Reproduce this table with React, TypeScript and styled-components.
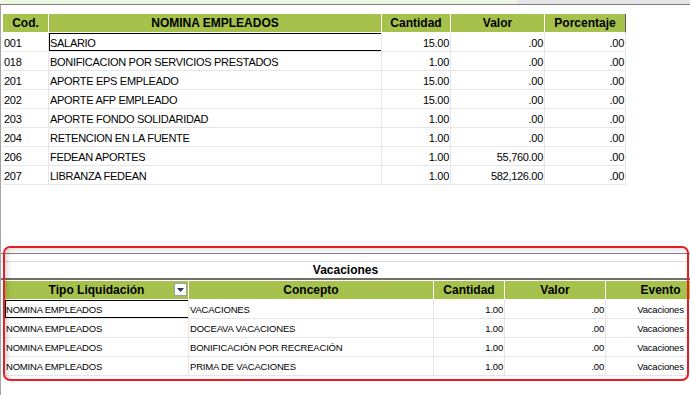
import styled, { createGlobalStyle } from "styled-components";

type Col = { title: string; width: number; align?: "left" | "right" | "center" };

const topCols: Col[] = [
  { title: "Cod.", width: 46 },
  { title: "NOMINA EMPLEADOS", width: 333 },
  { title: "Cantidad", width: 69, align: "right" },
  { title: "Valor", width: 94, align: "right" },
  { title: "Porcentaje", width: 81, align: "right" },
];

const topRows = [
  ["001", "SALARIO", "15.00", ".00", ".00"],
  ["018", "BONIFICACION POR SERVICIOS PRESTADOS", "1.00", ".00", ".00"],
  ["201", "APORTE EPS EMPLEADO", "15.00", ".00", ".00"],
  ["202", "APORTE AFP EMPLEADO", "15.00", ".00", ".00"],
  ["203", "APORTE FONDO SOLIDARIDAD", "1.00", ".00", ".00"],
  ["204", "RETENCION EN LA FUENTE", "1.00", ".00", ".00"],
  ["206", "FEDEAN APORTES", "1.00", "55,760.00", ".00"],
  ["207", "LIBRANZA FEDEAN", "1.00", "582,126.00", ".00"],
];

const bottomCols: Col[] = [
  { title: "Tipo Liquidación", width: 184 },
  { title: "Concepto", width: 245 },
  { title: "Cantidad", width: 71, align: "right" },
  { title: "Valor", width: 101, align: "right" },
  { title: "Evento", width: 110, align: "center" },
];

const bottomRows = [
  ["NOMINA EMPLEADOS", "VACACIONES", "1.00", ".00", "Vacaciones"],
  ["NOMINA EMPLEADOS", "DOCEAVA VACACIONES", "1.00", ".00", "Vacaciones"],
  ["NOMINA EMPLEADOS", "BONIFICACIÓN POR RECREACIÓN", "1.00", ".00", "Vacaciones"],
  ["NOMINA EMPLEADOS", "PRIMA DE VACACIONES", "1.00", ".00", "Vacaciones"],
];

const GlobalStyle = createGlobalStyle`
  html, body {
    margin: 0;
    padding: 0;
    background: #fff;
    overflow: hidden;
  }
  body {
    font-family: "Liberation Sans", Arial, sans-serif;
    color: #000;
  }
`;

const Page = styled.div`
  position: relative;
  width: 690px;
  height: 395px;
  overflow: hidden;
  display: flex;
  flex-direction: column;
  background: #fff;
`;

const TopBar = styled.div`
  display: flex;
  height: 4px;
  border-bottom: 1px solid #7c7c7c;
`;

const TopBarPart = styled.div<{ $bg: string; $grow?: boolean }>`
  width: ${(p) => (p.$grow ? "auto" : "517px")};
  flex: ${(p) => (p.$grow ? 1 : "none")};
  background: ${(p) => p.$bg};
`;

const Main = styled.div`
  flex: 1;
  display: flex;
  flex-direction: column;
  border-left: 1px solid #a4a4a4;
`;

const TopSection = styled.div`
  height: 239px;
  padding: 9px 0 0 2px;
`;

const Grid = styled.div<{ $cols: string }>`
  display: grid;
  grid-template-columns: ${(p) => p.$cols};
  width: max-content;
`;

const HeadCell = styled.div<{ $last?: boolean; $size: number }>`
  position: relative;
  box-sizing: border-box;
  height: 19px;
  background: #a7c24c;
  border-right: 1px solid ${(p) => (p.$last ? "#5a5a5a" : "#fff")};
  border-bottom: 1px solid #fff;
  font-weight: bold;
  font-size: ${(p) => p.$size}px;
  line-height: 18px;
  text-align: center;
  white-space: nowrap;
  overflow: hidden;
`;

const Cell = styled.div<{
  $align?: string;
  $size: number;
  $spacing: number;
  $selected?: boolean;
}>`
  box-sizing: border-box;
  height: 19px;
  padding: 1px ${(p) => (p.$align === "right" ? "1px" : "0")} 0
    ${(p) => (p.$align === "right" || p.$align === "center" ? "0" : "1px")};
  border-right: 1px solid #e6e6e6;
  border-bottom: 1px solid #e6e6e6;
  font-size: ${(p) => p.$size}px;
  letter-spacing: ${(p) => p.$spacing}px;
  line-height: 18px;
  text-align: ${(p) => p.$align ?? "left"};
  white-space: nowrap;
  overflow: hidden;
  box-shadow: ${(p) =>
    p.$selected
      ? "inset 1px 0 0 #000, inset 0 1px 0 #000, inset 0 -1px 0 #000"
      : "none"};
`;

const BottomPanel = styled.div`
  border-top: 1px solid #7f7f7f;
  display: flex;
  flex-direction: column;
`;

const PanelGap = styled.div`
  height: 7px;
  border-bottom: 1px solid #dadada;
`;

const PanelTitle = styled.div`
  height: 16px;
  line-height: 16px;
  text-align: center;
  font-weight: bold;
  font-size: 12px;
  border-bottom: 2px solid #6e6e6e;
`;

const BottomTable = styled.div`
  margin: 1px 0 0 4px;
`;

const DropButton = styled.div`
  position: absolute;
  right: 1px;
  top: 2px;
  width: 13px;
  height: 13px;
  box-sizing: border-box;
  background: #fff;
  border: 1px solid #9aa0a8;
  display: flex;
  align-items: center;
  justify-content: center;
`;

const Highlight = styled.div`
  position: absolute;
  left: 3px;
  top: 246px;
  width: 686px;
  height: 135px;
  box-sizing: border-box;
  border: 2px solid #ec1c24;
  border-radius: 7px;
  box-shadow: inset 3px 2px 5px rgba(0, 0, 0, 0.14);
  pointer-events: none;
`;

const colsTemplate = (cols: Col[]) => cols.map((c) => `${c.width}px`).join(" ");

const App = () => (
  <>
    <GlobalStyle />
    <Page>
      <TopBar>
        <TopBarPart $bg="#eef5e2" />
        <TopBarPart $bg="#e6e6e6" $grow />
      </TopBar>
      <Main>
        <TopSection>
          <Grid $cols={colsTemplate(topCols)}>
            {topCols.map((c, i) => (
              <HeadCell key={c.title} $size={12} $last={i === topCols.length - 1}>
                {c.title}
              </HeadCell>
            ))}
            {topRows.map((row, r) =>
              row.map((v, i) => (
                <Cell
                  key={`${r}-${i}`}
                  $align={topCols[i].align}
                  $size={11}
                  $spacing={-0.3}
                  $selected={r === 0 && i === 1}
                >
                  {v}
                </Cell>
              ))
            )}
          </Grid>
        </TopSection>
        <BottomPanel>
          <PanelGap />
          <PanelTitle>Vacaciones</PanelTitle>
          <BottomTable>
            <Grid $cols={colsTemplate(bottomCols)}>
              {bottomCols.map((c, i) => (
                <HeadCell key={c.title} $size={12}>
                  {c.title}
                  {i === 0 && (
                    <DropButton>
                      <svg width="7" height="4" viewBox="0 0 7 4">
                        <path d="M0 0H7L3.5 4Z" fill="#26345e" />
                      </svg>
                    </DropButton>
                  )}
                </HeadCell>
              ))}
              {bottomRows.map((row, r) =>
                row.map((v, i) => (
                  <Cell
                    key={`${r}-${i}`}
                    $align={bottomCols[i].align}
                    $size={9.5}
                    $spacing={-0.2}
                    $selected={r === 0 && i === 0}
                  >
                    {v}
                  </Cell>
                ))
              )}
            </Grid>
          </BottomTable>
        </BottomPanel>
      </Main>
      <Highlight />
    </Page>
  </>
);

export default App;
